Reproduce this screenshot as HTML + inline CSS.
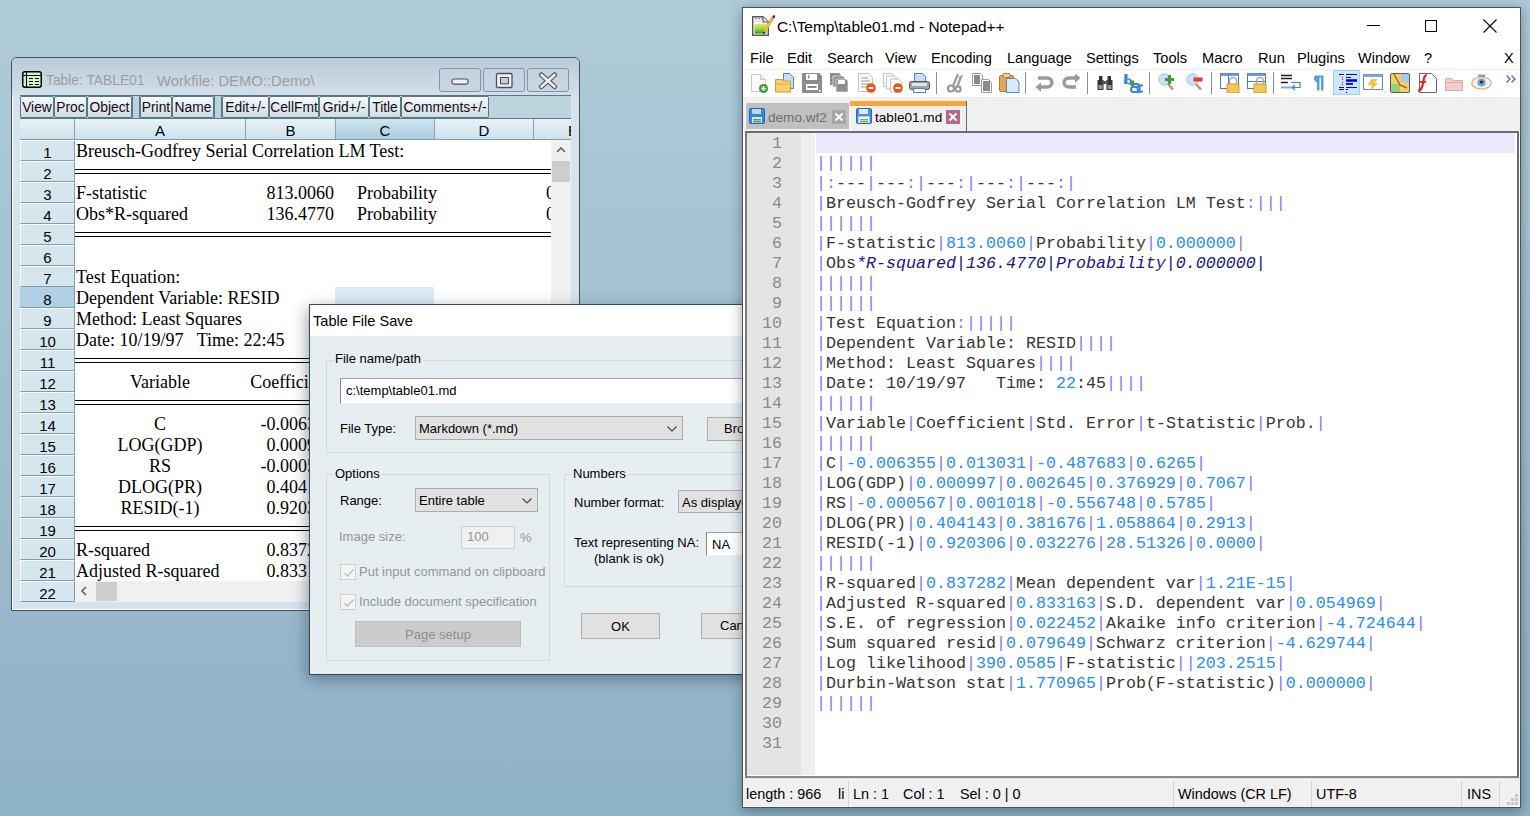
<!DOCTYPE html>
<html><head><meta charset="utf-8">
<style>
*{box-sizing:border-box;margin:0;padding:0}
html,body{width:1530px;height:816px;overflow:hidden}
body{position:relative;font-family:"Liberation Sans",sans-serif;background:linear-gradient(180deg,#afcbd8 0%,#a2c0cf 45%,#8eb2c6 100%)}
.a{position:absolute}

#ev{left:11px;top:57px;width:569px;height:554px;border:1px solid #4a4d52;border-radius:6px 6px 0 0;background:#d6e3ef;overflow:hidden;box-shadow:inset 1px 0 0 #fff,inset 0 -1px 0 #fff}
#evt{left:0;top:0;width:567px;height:37px;background:linear-gradient(180deg,#bccad8,#d2deea)}
#evtitle{left:34px;top:15px;font-size:13.8px;color:#9e9e9e;white-space:pre}
#evtitle2{left:145px;top:15px;font-size:14.8px;color:#9e9e9e;white-space:pre}
.wb{height:24px;width:42px;border:1px solid #8591ad;border-radius:3px;background:linear-gradient(180deg,#c4d1de,#c9d6e3)}
#evtb{left:8px;top:37px;width:551px;height:24px;background:#bdd3dd;border-top:1px solid #587683;border-bottom:1px solid #587683}
.tb{top:0;height:22px;border:1px solid #5a7785;border-radius:2px;background:linear-gradient(180deg,#f6f9fb 0%,#e3ebef 50%,#cfdde4 100%);font-size:13.8px;color:#140a14;text-align:center;line-height:22px;white-space:nowrap;overflow:hidden}
.tsep{top:0;height:22px;width:8px;background:#bcd2dc;border-left:1px solid #5a7785;border-right:1px solid #5a7785}
#colh{left:8px;top:61px;width:551px;height:21px;overflow:hidden;background:linear-gradient(180deg,#e9f2f6,#cde2ec);border-bottom:1px solid #7e9cab}
.ch{top:0;height:20px;border-left:1px solid #84a2b1;text-align:center;font-size:15px;line-height:24px;color:#000}
#grid{left:63px;top:82px;width:476px;height:441px;background:#fff;overflow:hidden}
.gc{position:absolute;margin-top:1px;font-family:"Liberation Serif",serif;font-size:18px;line-height:21px;height:21px;white-space:pre;color:#000}
.dl{position:absolute;left:0;width:476px;height:5px;border-top:1.5px solid #000;border-bottom:1.5px solid #000}
.rh{position:absolute;left:8px;width:55px;height:21px;background:#d5e6ef;border-top:1px solid #fff;border-left:1px solid #fff;border-bottom:1px solid #7e9cab;border-right:1px solid #7e9cab;text-align:center;font-size:15px;line-height:23px;color:#000}
.rh.sel{background:#b0d0e3;border-top-color:#b0d0e3;border-left-color:#b0d0e3}
#vsb{left:539px;top:82px;width:20px;height:441px;background:#f0f0f0}
#hsb{left:63px;top:523px;width:476px;height:21px;background:#f0f0f0}

#dlg{left:309px;top:304px;width:460px;height:371px;border:1px solid #3b4750;background:#e7eef1;box-shadow:-2px 4px 14px rgba(30,50,70,.45)}
#dlgt{left:0;top:0;width:460px;height:31px;background:#fff}
.dt{font-size:13px;color:#000;white-space:pre;line-height:16px}
.grp{border:1px solid #d8d8d6;border-radius:0}
.glbl{background:#e7eef1;padding:0 2px}
.btn{background:#e1e1e1;border:1px solid #adadad;text-align:center;font-size:13px;line-height:26px;color:#000}
.dd{background:#e1e1e1;border:1px solid #adadad}
.tbx{background:#fff;border-top:1px solid #a0a0a0;border-left:1px solid #8a8a8a;border-bottom:1px solid #f0f0f0;border-right:1px solid #f0f0f0}
.dis{color:#959595}

#npp{left:742px;top:7px;width:779px;height:801px;border:1px solid #4c5258;background:#fff;overflow:hidden;box-shadow:0 3px 12px rgba(20,40,60,.45)}
.nt{font-size:14px;color:#000;white-space:pre;line-height:17px}
#menub{left:0;top:38px;width:777px;height:24px;background:#fff}
#tbar{left:0;top:61px;width:776px;height:29px;background:#fff;border-top:1px solid #f0f0f0;border-bottom:1px solid #f0f0f0}
#tabs{left:0;top:90px;width:777px;height:33px;background:#f0f0f0}
#ed{left:2px;top:123px;width:774px;height:647px;background:#fff;border-top:2px solid #6d6d6d;border-left:2px solid #7a7a7a;border-right:2px solid #6d6d6d;border-bottom:2px solid #8a8a8a}
#lnm{left:0;top:0;width:54px;height:642px;background:#e4e4e4}
#fold{left:54px;top:0;width:14px;height:642px;background-color:#f4f4f4;background-image:linear-gradient(45deg,#e8e8e8 25%,transparent 25%,transparent 75%,#e8e8e8 75%),linear-gradient(45deg,#e8e8e8 25%,transparent 25%,transparent 75%,#e8e8e8 75%);background-size:2px 2px;background-position:0 0,1px 1px}
#curl{left:69px;top:0;width:699px;height:20px;background:#e8e8ff}
.ln{position:absolute;left:0;margin-top:1px;width:35px;text-align:right;font-family:"Liberation Mono",monospace;font-size:16.67px;line-height:20px;height:20px;color:#8a8a8a}
.tl{position:absolute;left:69px;margin-top:1px;font-family:"Liberation Mono",monospace;font-size:16.67px;line-height:20px;height:20px;white-space:pre;color:#303030}
.p{color:#7b7bf7}.n{color:#2b8cf0}.i{color:#15158a;font-style:italic}.d{color:#363636}
#stat{left:0;top:770px;width:777px;height:29px;background:#f0f0f0;border-top:1px solid #e4e4e4;border-bottom:1px solid #fff}
.sep{position:absolute;top:2px;width:1px;height:27px;background:#d4d4d4}

</style></head><body>
<div id="ev" class="a">
  <div id="evt" class="a"></div>
  <svg class="a" style="left:10px;top:13px" width="20" height="17" viewBox="0 0 20 17">
    <rect x="0.75" y="0.75" width="18.5" height="15.5" rx="2.2" fill="#d2f5c9" stroke="#000" stroke-width="1.5"/>
    <line x1="4.5" y1="0" x2="4.5" y2="17" stroke="#000" stroke-width="1.1"/>
    <line x1="0" y1="4.5" x2="20" y2="4.5" stroke="#000" stroke-width="1.1"/>
    <path d="M7 7.5h4M13 7.5h4M7 10.5h4M13 10.5h4M7 13.5h4M13 13.5h4" stroke="#000" stroke-width="1.1"/>
  </svg>
  <div id="evtitle" class="a">Table: TABLE01</div><div id="evtitle2" class="a">Workfile: DEMO::Demo\</div>
  <div class="a wb" style="left:427px;top:10px"><svg class="a" style="left:11px;top:9px" width="19" height="8" viewBox="0 0 19 8"><rect x="1" y="1" width="16" height="5.2" rx="2" fill="#f2f2f2" stroke="#4a4f60" stroke-width="1.2"/></svg></div>
  <div class="a wb" style="left:471px;top:10px"><svg class="a" style="left:11px;top:3px" width="19" height="18" viewBox="0 0 19 18"><rect x="1.5" y="1.5" width="15.5" height="14" rx="1.2" fill="#f2f2f2" stroke="#4a4f60" stroke-width="1.3"/><rect x="5.5" y="5.5" width="8" height="6.3" fill="#c4d1de" stroke="#4a4f60" stroke-width="1.1"/></svg></div>
  <div class="a wb" style="left:515px;top:10px"><svg class="a" style="left:10px;top:3px" width="20" height="18" viewBox="0 0 20 18"><path d="M3.5 3 L16.5 14.5 M16.5 3 L3.5 14.5" stroke="#4a4f60" stroke-width="5" stroke-linecap="round"/><path d="M3.5 3 L16.5 14.5 M16.5 3 L3.5 14.5" stroke="#eeeeee" stroke-width="2.8" stroke-linecap="round"/></svg></div>
  <div id="evtb" class="a">
    <div class="a tb" style="left:0;width:34px">View</div>
    <div class="a tb" style="left:34px;width:33px">Proc</div>
    <div class="a tb" style="left:67px;width:45px">Object</div>
    <div class="a tsep" style="left:112px"></div>
    <div class="a tb" style="left:120px;width:32px">Print</div>
    <div class="a tb" style="left:152px;width:42px">Name</div>
    <div class="a tsep" style="left:194px"></div>
    <div class="a tb" style="left:202px;width:47px">Edit+/-</div>
    <div class="a tb" style="left:249px;width:50px">CellFmt</div>
    <div class="a tb" style="left:299px;width:50px">Grid+/-</div>
    <div class="a tb" style="left:349px;width:32px">Title</div>
    <div class="a tb" style="left:381px;width:88px">Comments+/-</div>
  </div>
  <div id="colh" class="a">
    <div class="a ch" style="left:54px;width:171px">A</div>
    <div class="a ch" style="left:225px;width:90px">B</div>
    <div class="a ch" style="left:315px;width:99px;background:linear-gradient(180deg,#cfe4ef,#a9cde0)">C</div>
    <div class="a ch" style="left:414px;width:99px">D</div>
    <div class="a ch" style="left:513px;width:60px;text-align:left;padding-left:34px">E</div>
  </div>
  <div id="grid" class="a">
<div class="a" style="left:260px;top:147px;width:99px;height:21px;background:#dcecf6"></div>
<div class="gc" style="left:1px;top:0px">Breusch-Godfrey Serial Correlation LM Test:</div>
<div class="gc" style="left:1px;top:42px">F-statistic</div>
<div class="gc" style="left:171px;width:88px;top:42px;text-align:right">813.0060</div>
<div class="gc" style="left:282px;top:42px">Probability</div>
<div class="gc" style="left:471px;top:42px">0.000000</div>
<div class="gc" style="left:1px;top:63px">Obs*R-squared</div>
<div class="gc" style="left:171px;width:88px;top:63px;text-align:right">136.4770</div>
<div class="gc" style="left:282px;top:63px">Probability</div>
<div class="gc" style="left:471px;top:63px">0.000000</div>
<div class="gc" style="left:1px;top:126px">Test Equation:</div>
<div class="gc" style="left:1px;top:147px">Dependent Variable: RESID</div>
<div class="gc" style="left:1px;top:168px">Method: Least Squares</div>
<div class="gc" style="left:1px;top:189px">Date: 10/19/97   Time: 22:45</div>
<div class="gc" style="left:0px;width:170px;top:231px;text-align:center">Variable</div>
<div class="gc" style="left:171px;width:89px;top:231px;text-align:center">Coefficient</div>
<div class="gc" style="left:0px;width:170px;top:273px;text-align:center">C</div>
<div class="gc" style="left:171px;width:88px;top:273px;text-align:right">-0.006355</div>
<div class="gc" style="left:0px;width:170px;top:294px;text-align:center">LOG(GDP)</div>
<div class="gc" style="left:171px;width:88px;top:294px;text-align:right">0.000997</div>
<div class="gc" style="left:0px;width:170px;top:315px;text-align:center">RS</div>
<div class="gc" style="left:171px;width:88px;top:315px;text-align:right">-0.000567</div>
<div class="gc" style="left:0px;width:170px;top:336px;text-align:center">DLOG(PR)</div>
<div class="gc" style="left:171px;width:88px;top:336px;text-align:right">0.404143</div>
<div class="gc" style="left:0px;width:170px;top:357px;text-align:center">RESID(-1)</div>
<div class="gc" style="left:171px;width:88px;top:357px;text-align:right">0.920306</div>
<div class="gc" style="left:1px;top:399px">R-squared</div>
<div class="gc" style="left:171px;width:88px;top:399px;text-align:right">0.837282</div>
<div class="gc" style="left:1px;top:420px">Adjusted R-squared</div>
<div class="gc" style="left:171px;width:88px;top:420px;text-align:right">0.833163</div>
<div class="dl" style="top:29px"></div>
<div class="dl" style="top:92px"></div>
<div class="dl" style="top:218px"></div>
<div class="dl" style="top:260px"></div>
<div class="dl" style="top:386px"></div>
  </div>
<div class="rh" style="top:82px">1</div>
<div class="rh" style="top:103px">2</div>
<div class="rh" style="top:124px">3</div>
<div class="rh" style="top:145px">4</div>
<div class="rh" style="top:166px">5</div>
<div class="rh" style="top:187px">6</div>
<div class="rh" style="top:208px">7</div>
<div class="rh sel" style="top:229px">8</div>
<div class="rh" style="top:250px">9</div>
<div class="rh" style="top:271px">10</div>
<div class="rh" style="top:292px">11</div>
<div class="rh" style="top:313px">12</div>
<div class="rh" style="top:334px">13</div>
<div class="rh" style="top:355px">14</div>
<div class="rh" style="top:376px">15</div>
<div class="rh" style="top:397px">16</div>
<div class="rh" style="top:418px">17</div>
<div class="rh" style="top:439px">18</div>
<div class="rh" style="top:460px">19</div>
<div class="rh" style="top:481px">20</div>
<div class="rh" style="top:502px">21</div>
<div class="rh" style="top:523px">22</div>
  <div id="vsb" class="a">
    <svg class="a" style="left:5px;top:6px" width="10" height="8" viewBox="0 0 10 8"><path d="M1 6 L5 2 L9 6" fill="none" stroke="#606060" stroke-width="1.6"/></svg>
    <div class="a" style="left:1px;top:21px;width:18px;height:21px;background:#cdcdcd"></div>
  </div>
  <div id="hsb" class="a">
    <svg class="a" style="left:5px;top:5px" width="8" height="10" viewBox="0 0 8 10"><path d="M6 1 L2 5 L6 9" fill="none" stroke="#606060" stroke-width="1.6"/></svg>
    <div class="a" style="left:21px;top:1px;width:21px;height:19px;background:#cdcdcd"></div>
  </div>
</div>
<div id="dlg" class="a">
<div id="dlgt" class="a"></div>
<div class="a dt" style="left:3px;top:7px;font-size:14.6px;line-height:18px">Table File Save</div>
<div class="a grp" style="left:16px;top:55px;width:474px;height:93px;"></div>
<div class="a dt glbl" style="left:23px;top:46px;">File name/path</div>
<div class="a tbx" style="left:30px;top:73px;width:460px;height:26px;"></div>
<div class="a dt" style="left:36px;top:78px;">c:\temp\table01.md</div>
<div class="a dt" style="left:30px;top:116px;">File Type:</div>
<div class="a dd" style="left:105px;top:111px;width:268px;height:24px;"><svg class="a" style="right:5px;top:9px" width="10" height="6" viewBox="0 0 10 6"><path d="M0.5 0.5 L5 5 L9.5 0.5" fill="none" stroke="#404040" stroke-width="1.1"/></svg></div>
<div class="a dt" style="left:109px;top:116px;">Markdown (*.md)</div>
<div class="a btn" style="left:397px;top:112px;width:93px;height:24px;"></div>
<div class="a dt" style="left:414px;top:116px;">Browse...</div>
<div class="a grp" style="left:16px;top:169px;width:224px;height:187px;"></div>
<div class="a dt glbl" style="left:23px;top:161px;">Options</div>
<div class="a dt" style="left:30px;top:188px;">Range:</div>
<div class="a dd" style="left:105px;top:183px;width:123px;height:24px;"><svg class="a" style="right:5px;top:9px" width="10" height="6" viewBox="0 0 10 6"><path d="M0.5 0.5 L5 5 L9.5 0.5" fill="none" stroke="#404040" stroke-width="1.1"/></svg></div>
<div class="a dt" style="left:109px;top:188px;">Entire table</div>
<div class="a dt dis" style="left:29px;top:224px;">Image size:</div>
<div class="a" style="left:151px;top:221px;width:54px;height:23px;background:#f0f0f0;border:1px solid #cfcfcf"></div>
<div class="a dt dis" style="left:157px;top:224px;">100</div>
<div class="a dt dis" style="left:210px;top:225px;">%</div>
<div class="a" style="left:30px;top:259px;width:16px;height:16px;background:#f4f4f4;border:1px solid #cfcfcf"><svg class="a" style="left:2px;top:2px" width="12" height="12" viewBox="0 0 12 12"><path d="M1.5 6 L4.5 9 L10.5 2.5" fill="none" stroke="#bcbcbc" stroke-width="1.3"/></svg></div>
<div class="a dt dis" style="left:49px;top:259px;">Put input command on clipboard</div>
<div class="a" style="left:30px;top:289px;width:16px;height:16px;background:#f4f4f4;border:1px solid #cfcfcf"><svg class="a" style="left:2px;top:2px" width="12" height="12" viewBox="0 0 12 12"><path d="M1.5 6 L4.5 9 L10.5 2.5" fill="none" stroke="#bcbcbc" stroke-width="1.3"/></svg></div>
<div class="a dt dis" style="left:49px;top:289px;">Include document specification</div>
<div class="a" style="left:45px;top:316px;width:166px;height:26px;background:#cccccc;border:1px solid #bfbfbf;color:#8c8c8c;font-size:13px;line-height:26px;text-align:center">Page setup</div>
<div class="a grp" style="left:254px;top:169px;width:236px;height:113px;"></div>
<div class="a dt glbl" style="left:261px;top:161px;">Numbers</div>
<div class="a dt" style="left:264px;top:190px;">Number format:</div>
<div class="a dd" style="left:368px;top:185px;width:122px;height:23px;"></div>
<div class="a dt" style="left:372px;top:190px;">As displayed</div>
<div class="a dt" style="left:264px;top:230px;">Text representing NA:</div>
<div class="a dt" style="left:284px;top:246px;">(blank is ok)</div>
<div class="a tbx" style="left:396px;top:227px;width:94px;height:24px;"></div>
<div class="a dt" style="left:402px;top:232px;">NA</div>
<div class="a btn" style="left:271px;top:308px;width:79px;height:26px;">OK</div>
<div class="a btn" style="left:391px;top:308px;width:99px;height:26px;"></div>
<div class="a dt" style="left:410px;top:313px;">Cancel</div>
</div>
<div id="npp" class="a">
<svg class="a" style="left:9px;top:7px;" width="23" height="22" viewBox="0 0 23 22"><defs><linearGradient id="ng" x1="0" y1="0" x2="0" y2="1"><stop offset="0" stop-color="#e2e46a"/><stop offset="0.35" stop-color="#b6e040"/><stop offset="0.75" stop-color="#5cc82a"/><stop offset="1" stop-color="#208a18"/></linearGradient></defs><path d="M0.7 1.7 H11 L16.3 7 V20.3 H0.7 Z" fill="#f6f6f6" stroke="#585858" stroke-width="1.4"/><path d="M11 1.7 V7 H16.3" fill="#eaeaea" stroke="#585858" stroke-width="1.2"/><path d="M3 3.6h2M6 3.6h2M9 3.6h1.5" stroke="#9a9a9a" stroke-width="1.2"/><path d="M3 6.3h8" stroke="#b8cfe0" stroke-width="0.8"/><rect x="2.6" y="9" width="11.8" height="9.6" rx="0.8" fill="url(#ng)"/><path d="M20.3 3.5 L12.2 17.3" stroke="#f0aa18" stroke-width="3"/><path d="M20.3 3.5 L13 16" stroke="#f8cc50" stroke-width="1"/><path d="M12.5 16.8 L11.4 19" stroke="#333" stroke-width="1.6"/><path d="M21.3 1.8 L19.6 4.6" stroke="#9aa3b0" stroke-width="2.6"/><circle cx="22" cy="1.6" r="1.4" fill="#a00010"/></svg>
<div class="a nt" style="left:34px;top:10px;font-size:15.4px;line-height:18px;color:#000">C:\Temp\table01.md - Notepad++</div>
<svg class="a" style="left:624px;top:17px;" width="13" height="1" viewBox="0 0 13 1"><rect width="13" height="1" fill="#000"/></svg>
<svg class="a" style="left:682px;top:12px;" width="12" height="12" viewBox="0 0 12 12"><rect x="0.5" y="0.5" width="11" height="11" fill="none" stroke="#000"/></svg>
<svg class="a" style="left:740px;top:11px;" width="14" height="14" viewBox="0 0 14 14"><path d="M0.5 0.5 L13.5 13.5 M13.5 0.5 L0.5 13.5" stroke="#000" stroke-width="1.1"/></svg>
<div class="a nt" style="left:7px;top:42px;font-size:14.6px">File</div>
<div class="a nt" style="left:44px;top:42px;font-size:14.6px">Edit</div>
<div class="a nt" style="left:84px;top:42px;font-size:14.6px">Search</div>
<div class="a nt" style="left:142px;top:42px;font-size:14.6px">View</div>
<div class="a nt" style="left:188px;top:42px;font-size:14.6px">Encoding</div>
<div class="a nt" style="left:264px;top:42px;font-size:14.6px">Language</div>
<div class="a nt" style="left:343px;top:42px;font-size:14.6px">Settings</div>
<div class="a nt" style="left:410px;top:42px;font-size:14.6px">Tools</div>
<div class="a nt" style="left:459px;top:42px;font-size:14.6px">Macro</div>
<div class="a nt" style="left:515px;top:42px;font-size:14.6px">Run</div>
<div class="a nt" style="left:554px;top:42px;font-size:14.6px">Plugins</div>
<div class="a nt" style="left:615px;top:42px;font-size:14.6px">Window</div>
<div class="a nt" style="left:681px;top:42px;font-size:14.6px">?</div>
<div class="a nt" style="left:761px;top:42px;font-size:14.6px">X</div>
<div class="a" style="left:0;top:61px;width:776px;height:1px;background:#f0f0f0"></div>
<div class="a" style="left:0;top:89px;width:776px;height:1px;background:#ececec"></div>
<svg class="a" style="left:6px;top:65px;" width="20" height="20" viewBox="0 0 20 20"><path d="M2.5 1.5h9l5 5v12h-14z" fill="#fbfbfb" stroke="#c8c8c8"/><path d="M11.5 1.5v5h5" fill="#eee" stroke="#c8c8c8"/><circle cx="14.5" cy="15.5" r="4.5" fill="#3c9a3c"/><path d="M14.5 13v5M12 15.5h5" stroke="#fff" stroke-width="1.6"/></svg>
<svg class="a" style="left:32px;top:65px;" width="20" height="20" viewBox="0 0 20 20"><path d="M8.5 0.5h6l4 4v11h-10z" fill="#c9dcf7" stroke="#4a86d8"/><path d="M0.5 6.5h7l1 1.5h7v11h-15z" fill="#f6cf6e" stroke="#d99a2a"/><path d="M1 11h14" stroke="#e0b04a"/></svg>
<svg class="a" style="left:59px;top:65px;" width="20" height="20" viewBox="0 0 20 20"><path d="M0 0h17l3 3v17h-20z" fill="#8d8d8d"/><rect x="4" y="1" width="11" height="6" fill="#fff"/><rect x="6" y="2" width="1.4" height="3.5" fill="#8d8d8d"/><rect x="4" y="11" width="12" height="6" fill="#fff"/><rect x="5.5" y="13" width="9" height="2" fill="#8d8d8d"/><rect x="17" y="17" width="1.6" height="1.6" fill="#fff"/></svg>
<svg class="a" style="left:87px;top:65px;" width="19" height="20" viewBox="0 0 19 20"><path d="M0 0h9l2 2v10h-11z" fill="#8d8d8d"/><path d="M3 3h10l2 2v9h-12z" fill="#8d8d8d" stroke="#fff" stroke-width="0.6"/><path d="M6 6h10l2 2v11h-12z" fill="#8d8d8d" stroke="#fff" stroke-width="0.6"/><rect x="8" y="7" width="7" height="4" fill="#fff"/></svg>
<svg class="a" style="left:114px;top:65px;" width="20" height="20" viewBox="0 0 20 20"><path d="M1.5 0.5h10l4 4v14h-14z" fill="#fafafa" stroke="#c4c4c4"/><path d="M4 5h7M4 8h9M4 11h8M4 14h6" stroke="#9a9a9a" stroke-width="1"/><circle cx="14" cy="15" r="4.8" fill="#e2571d"/><path d="M11.5 15h5" stroke="#fff" stroke-width="1.8"/></svg>
<svg class="a" style="left:140px;top:65px;" width="21" height="20" viewBox="0 0 21 20"><path d="M0.5 0.5h8l3 3v10h-11z" fill="#fafafa" stroke="#c4c4c4"/><path d="M3.5 3h8l3 3v10h-11z" fill="#fafafa" stroke="#c4c4c4"/><path d="M7.5 6h8l3 3v10h-11z" fill="#fafafa" stroke="#c4c4c4"/><circle cx="15" cy="15" r="4.8" fill="#e2571d"/><path d="M12.5 15h5" stroke="#fff" stroke-width="1.8"/></svg>
<svg class="a" style="left:166px;top:65px;" width="21" height="20" viewBox="0 0 21 20"><path d="M5.5 0.5h8l3 3v6h-11z" fill="#c9dcf7" stroke="#4a86d8"/><rect x="0.5" y="8.5" width="20" height="8" rx="2" fill="#9ea3a8" stroke="#4d5257"/><rect x="3" y="10" width="15" height="3" fill="#e0e3e6"/><rect x="4.5" y="15.5" width="12" height="4" fill="#fff" stroke="#4a86d8"/></svg>
<svg class="a" style="left:193px;top:64px;" width="1" height="22" viewBox="0 0 1 22"><rect width="1" height="22" fill="#8e8e8e"/></svg>
<svg class="a" style="left:204px;top:65px;" width="16" height="20" viewBox="0 0 16 20"><path d="M11 1 L6 13 M12 5 L14 4 L10 14" stroke="#999" stroke-width="2.2" fill="none"/><circle cx="4" cy="15.5" r="3" fill="none" stroke="#999" stroke-width="2.2"/><circle cx="11" cy="16" r="2.6" fill="none" stroke="#999" stroke-width="2.2"/></svg>
<svg class="a" style="left:229px;top:65px;" width="20" height="20" viewBox="0 0 20 20"><path d="M0.5 0.5h8l2 2v10h-10z" fill="#fff" stroke="#9a9a9a"/><rect x="2" y="2" width="6" height="9" fill="#8a8a8a"/><path d="M9.5 6.5h7l3 3v10h-10z" fill="#fff" stroke="#9a9a9a"/><rect x="11" y="8" width="7" height="10" fill="#8a8a8a"/></svg>
<svg class="a" style="left:256px;top:65px;" width="21" height="20" viewBox="0 0 21 20"><rect x="0.5" y="2.5" width="14" height="16" rx="1.5" fill="#e5a655" stroke="#b87a30"/><rect x="4" y="0.5" width="7" height="4" rx="1" fill="#f3d28c" stroke="#b87a30"/><path d="M7.5 5.5h9l3.5 3.5v10.5h-12.5z" fill="#dce8fb" stroke="#4a86d8"/></svg>
<svg class="a" style="left:282px;top:64px;" width="1" height="22" viewBox="0 0 1 22"><rect width="1" height="22" fill="#8e8e8e"/></svg>
<svg class="a" style="left:292px;top:66px;" width="19" height="19" viewBox="0 0 19 19"><path d="M3 4 H12 A5 4.5 0 0 1 12 13 H5" fill="none" stroke="#9a9a9a" stroke-width="3.4"/><path d="M0.5 13 L6 8.5 L6 18 Z" fill="#9a9a9a"/></svg>
<svg class="a" style="left:319px;top:66px;" width="19" height="19" viewBox="0 0 19 19"><path d="M16 4 H7 A5 4.5 0 0 0 7 13 H14" fill="none" stroke="#9a9a9a" stroke-width="3.4"/><path d="M18.5 4 L13 -0.5 L13 9 Z" fill="#9a9a9a"/></svg>
<svg class="a" style="left:344px;top:64px;" width="1" height="22" viewBox="0 0 1 22"><rect width="1" height="22" fill="#8e8e8e"/></svg>
<svg class="a" style="left:354px;top:67px;" width="16" height="16" viewBox="0 0 16 16"><rect x="0.5" y="5" width="6" height="10" fill="#333"/><rect x="9.5" y="5" width="6" height="10" fill="#333"/><rect x="2" y="1" width="3.5" height="5" fill="#333"/><rect x="10.5" y="1" width="3.5" height="5" fill="#333"/><rect x="5" y="6" width="6" height="3" fill="#556"/><rect x="1.5" y="10" width="4" height="4" fill="#8b99a8"/><rect x="10.5" y="10" width="4" height="4" fill="#8b99a8"/></svg>
<svg class="a" style="left:380px;top:65px;" width="20" height="20" viewBox="0 0 20 20"><path d="M1.5 1 h3 v4.5 a3 3 0 1 1 0 5.5 h-3.5 z M4.5 6.5 v3.5 a1.8 1.8 0 1 0 0 -3.5z" fill="#3a82e0" fill-rule="evenodd"/><path d="M8 7.5 h3 v3 h2 l-3.5 4 l-3.5 -4 h2z" fill="#3c9a3c"/><path d="M10.5 11 h3.5 a2.5 2.5 0 0 1 2.5 2.5 v5.5 h-6 a2.5 2.5 0 0 1 0 -5 h3.5" fill="none" stroke="#3a82e0" stroke-width="2"/><path d="M20 12.5 h-2.5 a3 3 0 0 0 0 6 h2.5" fill="none" stroke="#3a82e0" stroke-width="2"/></svg>
<svg class="a" style="left:406px;top:64px;" width="1" height="22" viewBox="0 0 1 22"><rect width="1" height="22" fill="#8e8e8e"/></svg>
<svg class="a" style="left:415px;top:65px;" width="18" height="18" viewBox="0 0 18 18"><circle cx="6.5" cy="6.5" r="5.8" fill="#cfe0f6" stroke="#a7c2e8"/><path d="M10 11 L15 16.5" stroke="#c7925a" stroke-width="2.6"/><path d="M11.5 2 v9 M7 6.5 h9" stroke="#3d9a3d" stroke-width="3.2"/></svg>
<svg class="a" style="left:443px;top:65px;" width="18" height="18" viewBox="0 0 18 18"><circle cx="6.5" cy="6.5" r="5.8" fill="#cfe0f6" stroke="#a7c2e8"/><path d="M10 11 L15 16.5" stroke="#c7925a" stroke-width="2.6"/><rect x="7.5" y="4.5" width="9" height="4" fill="#e63535"/></svg>
<svg class="a" style="left:468px;top:64px;" width="1" height="22" viewBox="0 0 1 22"><rect width="1" height="22" fill="#8e8e8e"/></svg>
<svg class="a" style="left:477px;top:65px;" width="21" height="20" viewBox="0 0 21 20"><rect x="0.5" y="0.5" width="18" height="15" fill="#fff" stroke="#4a78c8"/><rect x="0.5" y="0.5" width="18" height="2.5" fill="#6a9ae0"/><path d="M8.5 1v14" stroke="#4a78c8"/><rect x="7" y="11" width="12" height="9" fill="#f2c85a" stroke="#d09a30"/><path d="M9.5 11 v-3 a3 3 0 0 1 7 0 v3" fill="none" stroke="#aaa" stroke-width="1.6"/></svg>
<svg class="a" style="left:504px;top:65px;" width="21" height="20" viewBox="0 0 21 20"><rect x="0.5" y="0.5" width="18" height="15" fill="#fff" stroke="#4a78c8"/><rect x="0.5" y="0.5" width="18" height="2.5" fill="#6a9ae0"/><path d="M1 8.5h17" stroke="#4a78c8"/><rect x="7" y="11" width="12" height="9" fill="#f2c85a" stroke="#d09a30"/><path d="M9.5 11 v-3 a3 3 0 0 1 7 0 v3" fill="none" stroke="#aaa" stroke-width="1.6"/></svg>
<svg class="a" style="left:530px;top:64px;" width="1" height="22" viewBox="0 0 1 22"><rect width="1" height="22" fill="#8e8e8e"/></svg>
<svg class="a" style="left:538px;top:66px;" width="21" height="18" viewBox="0 0 21 18"><path d="M0 1.5h11M0 4.5h11M0 8.5h7" stroke="#222" stroke-width="1.3"/><path d="M10 8.5h9v5h-7" fill="none" stroke="#4a7bd0" stroke-width="1.2"/><path d="M0 13.5h12" stroke="#88a8e0" stroke-width="2"/><path d="M14 11 L11.5 13.5 L14 16" fill="none" stroke="#4a7bd0" stroke-width="1.2"/></svg>
<svg class="a" style="left:569px;top:67px;" width="12" height="16" viewBox="0 0 12 16"><path d="M4 0.5h7.5v15h-2.5v-13h-1.5v13h-2.5v-8a4 4 0 0 1 -1 -7.5z" fill="#5b9ae6"/></svg>
<svg class="a" style="left:590px;top:62px;" width="27" height="25" viewBox="0 0 27 25"><rect x="0.5" y="0.5" width="26" height="24" fill="#cce8ff" stroke="#99d1ff"/><path d="M6 4.5h5M13 4.5h11M13 7.5h5M13 17.5h11M6 17.5h5M6 19.5h5M13 19.5h2" stroke="#0000f0" stroke-width="1.2"/><rect x="13" y="9.2" width="11" height="2.6" fill="#0000f0"/><rect x="13" y="13" width="7" height="1.8" fill="#0000f0"/><circle cx="13.5" cy="22.5" r="0.7" fill="#0000f0"/><path d="M9.5 7v1M9.5 9v1M9.5 12v1M9.5 14v1" stroke="#f00010" stroke-width="1.1"/></svg>
<svg class="a" style="left:620px;top:66px;" width="20" height="18" viewBox="0 0 20 18"><rect x="0.5" y="0.5" width="19" height="15" fill="#fff" stroke="#5a8ad8"/><rect x="0.5" y="0.5" width="19" height="2.5" fill="#7aa6e6"/><path d="M8 5h7l-4 4h4l-8 8 2-6h-4z" fill="#f0c040"/></svg>
<svg class="a" style="left:647px;top:65px;" width="20" height="20" viewBox="0 0 20 20"><rect x="0.5" y="0.5" width="19" height="19" rx="1.5" fill="#e6d860" stroke="#555a6a"/><rect x="11" y="1" width="8" height="8" fill="#a7c8ef"/><rect x="1" y="11" width="9" height="8" fill="#9ccf7a"/><path d="M4 1 L10 12 L17 15" stroke="#e34040" stroke-width="1.4" fill="none"/></svg>
<svg class="a" style="left:675px;top:65px;" width="20" height="20" viewBox="0 0 20 20"><path d="M1.5 0.5h12l5 5v14h-17z" fill="#fff" stroke="#666"/><path d="M9 2 C5 2 6 9 4 14 S1 18 0 17" stroke="#e02525" stroke-width="2.2" fill="none"/><path d="M2 9h6" stroke="#e02525" stroke-width="1.8"/></svg>
<svg class="a" style="left:702px;top:68px;" width="18" height="15" viewBox="0 0 18 15"><path d="M0.5 2.5h6l2 2h9v10h-17z" fill="#f3cccc" stroke="#e0a8a8"/><path d="M1 6.5h16" stroke="#e0a8a8"/></svg>
<svg class="a" style="left:728px;top:66px;" width="21" height="17" viewBox="0 0 21 17"><ellipse cx="10.5" cy="9" rx="9.8" ry="6" fill="#eef3f6" stroke="#e7a86a" stroke-width="1.2"/><circle cx="10.5" cy="8.5" r="4" fill="#7aa0d0"/><circle cx="10.5" cy="8" r="1.6" fill="#223"/><rect x="7" y="0.5" width="7" height="2.5" fill="#8ea0ae"/></svg>
<svg class="a" style="left:763px;top:67px;" width="11" height="8" viewBox="0 0 11 8"><path d="M0.5 0.5 L4 4 L0.5 7.5 M5.5 0.5 L9 4 L5.5 7.5" fill="none" stroke="#5a5aa0" stroke-width="1.2"/></svg>
<div id="tabs" class="a"></div>
<div class="a" style="left:2px;top:95px;width:104px;height:26px;background:#c0c0c0;border-left:1px solid #fff"></div>
<div class="a" style="left:107px;top:93px;width:117px;height:30px;background:#f0f0f0;border-right:1px solid #6e6e6e;border-left:1px solid #fff"></div>
<div class="a" style="left:107px;top:93px;width:116px;height:5px;background:#faa537"></div>
<svg class="a" style="left:6px;top:100px;" width="16" height="16" viewBox="0 0 16 16"><rect x="0.5" y="0.5" width="15" height="15" rx="1.5" fill="#3b82d8" stroke="#2266c0"/><rect x="3" y="1" width="9" height="5" fill="#b9d6f5"/><rect x="3" y="9" width="10" height="6" fill="#d8ecf8"/><rect x="4" y="11" width="8" height="1.5" fill="#4aa070"/><rect x="4" y="13" width="8" height="1.5" fill="#4aa070"/></svg>
<div class="a nt" style="left:25px;top:101px;font-size:13.6px;color:#6d6d6d">demo.wf2</div>
<svg class="a" style="left:89px;top:102px;" width="14" height="14" viewBox="0 0 14 14"><rect width="14" height="14" fill="#a6a6a6"/><path d="M3.5 3.5 L10.5 10.5 M10.5 3.5 L3.5 10.5" stroke="#fff" stroke-width="2"/></svg>
<svg class="a" style="left:113px;top:100px;" width="16" height="16" viewBox="0 0 16 16"><rect x="0.5" y="0.5" width="15" height="15" rx="1.5" fill="#4f8ee0" stroke="#2266c0"/><rect x="3" y="1" width="9" height="5" fill="#dbe9f8"/><rect x="2.5" y="8.5" width="11" height="6.5" fill="#fff"/><rect x="4" y="11" width="8" height="1.5" fill="#6cc04a"/><rect x="4" y="13" width="8" height="1.5" fill="#6cc04a"/></svg>
<div class="a nt" style="left:132px;top:101px;font-size:13.6px;color:#000">table01.md</div>
<svg class="a" style="left:203px;top:102px;" width="14" height="14" viewBox="0 0 14 14"><rect width="14" height="14" fill="#b46a86"/><path d="M3.5 3.5 L10.5 10.5 M10.5 3.5 L3.5 10.5" stroke="#fff" stroke-width="2"/></svg>
<div id="ed" class="a">
<div id="lnm" class="a"></div><div id="fold" class="a"></div><div id="curl" class="a"></div>
<div class="ln" style="top:0px">1</div>
<div class="ln" style="top:20px">2</div>
<div class="tl" style="top:20px"><span class="p">||||||</span></div>
<div class="ln" style="top:40px">3</div>
<div class="tl" style="top:40px"><span class="p">|:</span><span class="d">---</span><span class="p">|</span><span class="d">---</span><span class="p">:|</span><span class="d">---</span><span class="p">:|</span><span class="d">---</span><span class="p">:|</span><span class="d">---</span><span class="p">:|</span></div>
<div class="ln" style="top:60px">4</div>
<div class="tl" style="top:60px"><span class="p">|</span><span class="d">Breusch-Godfrey Serial Correlation LM Test</span><span class="p">:|||</span></div>
<div class="ln" style="top:80px">5</div>
<div class="tl" style="top:80px"><span class="p">||||||</span></div>
<div class="ln" style="top:100px">6</div>
<div class="tl" style="top:100px"><span class="p">|</span><span class="d">F-statistic</span><span class="p">|</span><span class="n">813.0060</span><span class="p">|</span><span class="d">Probability</span><span class="p">|</span><span class="n">0.000000</span><span class="p">|</span></div>
<div class="ln" style="top:120px">7</div>
<div class="tl" style="top:120px"><span class="p">|</span><span class="d">Obs</span><span class="i">*R-squared|136.4770|Probability|0.000000|</span></div>
<div class="ln" style="top:140px">8</div>
<div class="tl" style="top:140px"><span class="p">||||||</span></div>
<div class="ln" style="top:160px">9</div>
<div class="tl" style="top:160px"><span class="p">||||||</span></div>
<div class="ln" style="top:180px">10</div>
<div class="tl" style="top:180px"><span class="p">|</span><span class="d">Test Equation</span><span class="p">:|||||</span></div>
<div class="ln" style="top:200px">11</div>
<div class="tl" style="top:200px"><span class="p">|</span><span class="d">Dependent Variable: RESID</span><span class="p">||||</span></div>
<div class="ln" style="top:220px">12</div>
<div class="tl" style="top:220px"><span class="p">|</span><span class="d">Method: Least Squares</span><span class="p">||||</span></div>
<div class="ln" style="top:240px">13</div>
<div class="tl" style="top:240px"><span class="p">|</span><span class="d">Date: 10/19/97   Time: </span><span class="n">22</span><span class="d">:45</span><span class="p">||||</span></div>
<div class="ln" style="top:260px">14</div>
<div class="tl" style="top:260px"><span class="p">||||||</span></div>
<div class="ln" style="top:280px">15</div>
<div class="tl" style="top:280px"><span class="p">|</span><span class="d">Variable</span><span class="p">|</span><span class="d">Coefficient</span><span class="p">|</span><span class="d">Std. Error</span><span class="p">|</span><span class="d">t-Statistic</span><span class="p">|</span><span class="d">Prob.</span><span class="p">|</span></div>
<div class="ln" style="top:300px">16</div>
<div class="tl" style="top:300px"><span class="p">||||||</span></div>
<div class="ln" style="top:320px">17</div>
<div class="tl" style="top:320px"><span class="p">|</span><span class="d">C</span><span class="p">|</span><span class="n">-0.006355</span><span class="p">|</span><span class="n">0.013031</span><span class="p">|</span><span class="n">-0.487683</span><span class="p">|</span><span class="n">0.6265</span><span class="p">|</span></div>
<div class="ln" style="top:340px">18</div>
<div class="tl" style="top:340px"><span class="p">|</span><span class="d">LOG(GDP)</span><span class="p">|</span><span class="n">0.000997</span><span class="p">|</span><span class="n">0.002645</span><span class="p">|</span><span class="n">0.376929</span><span class="p">|</span><span class="n">0.7067</span><span class="p">|</span></div>
<div class="ln" style="top:360px">19</div>
<div class="tl" style="top:360px"><span class="p">|</span><span class="d">RS</span><span class="p">|</span><span class="n">-0.000567</span><span class="p">|</span><span class="n">0.001018</span><span class="p">|</span><span class="n">-0.556748</span><span class="p">|</span><span class="n">0.5785</span><span class="p">|</span></div>
<div class="ln" style="top:380px">20</div>
<div class="tl" style="top:380px"><span class="p">|</span><span class="d">DLOG(PR)</span><span class="p">|</span><span class="n">0.404143</span><span class="p">|</span><span class="n">0.381676</span><span class="p">|</span><span class="n">1.058864</span><span class="p">|</span><span class="n">0.2913</span><span class="p">|</span></div>
<div class="ln" style="top:400px">21</div>
<div class="tl" style="top:400px"><span class="p">|</span><span class="d">RESID(-1)</span><span class="p">|</span><span class="n">0.920306</span><span class="p">|</span><span class="n">0.032276</span><span class="p">|</span><span class="n">28.51326</span><span class="p">|</span><span class="n">0.0000</span><span class="p">|</span></div>
<div class="ln" style="top:420px">22</div>
<div class="tl" style="top:420px"><span class="p">||||||</span></div>
<div class="ln" style="top:440px">23</div>
<div class="tl" style="top:440px"><span class="p">|</span><span class="d">R-squared</span><span class="p">|</span><span class="n">0.837282</span><span class="p">|</span><span class="d">Mean dependent var</span><span class="p">|</span><span class="n">1.21E-15</span><span class="p">|</span></div>
<div class="ln" style="top:460px">24</div>
<div class="tl" style="top:460px"><span class="p">|</span><span class="d">Adjusted R-squared</span><span class="p">|</span><span class="n">0.833163</span><span class="p">|</span><span class="d">S.D. dependent var</span><span class="p">|</span><span class="n">0.054969</span><span class="p">|</span></div>
<div class="ln" style="top:480px">25</div>
<div class="tl" style="top:480px"><span class="p">|</span><span class="d">S.E. of regression</span><span class="p">|</span><span class="n">0.022452</span><span class="p">|</span><span class="d">Akaike info criterion</span><span class="p">|</span><span class="n">-4.724644</span><span class="p">|</span></div>
<div class="ln" style="top:500px">26</div>
<div class="tl" style="top:500px"><span class="p">|</span><span class="d">Sum squared resid</span><span class="p">|</span><span class="n">0.079649</span><span class="p">|</span><span class="d">Schwarz criterion</span><span class="p">|</span><span class="n">-4.629744</span><span class="p">|</span></div>
<div class="ln" style="top:520px">27</div>
<div class="tl" style="top:520px"><span class="p">|</span><span class="d">Log likelihood</span><span class="p">|</span><span class="n">390.0585</span><span class="p">|</span><span class="d">F-statistic</span><span class="p">||</span><span class="n">203.2515</span><span class="p">|</span></div>
<div class="ln" style="top:540px">28</div>
<div class="tl" style="top:540px"><span class="p">|</span><span class="d">Durbin-Watson stat</span><span class="p">|</span><span class="n">1.770965</span><span class="p">|</span><span class="d">Prob(F-statistic)</span><span class="p">|</span><span class="n">0.000000</span><span class="p">|</span></div>
<div class="ln" style="top:560px">29</div>
<div class="tl" style="top:560px"><span class="p">||||||</span></div>
<div class="ln" style="top:580px">30</div>
<div class="ln" style="top:600px">31</div>
</div>
<div id="stat" class="a">
<div class="a nt" style="left:3px;top:7px;font-size:14.4px">length : 966</div>
<div class="a nt" style="left:95px;top:7px;font-size:14.4px">li</div>
<div class="a" style="left:109px;top:0;width:660px;height:29px;background:#f0f0f0"></div>
<div class="a nt" style="left:110px;top:7px;font-size:14.4px">Ln : 1</div>
<div class="a nt" style="left:160px;top:7px;font-size:14.4px">Col : 1</div>
<div class="a nt" style="left:217px;top:7px;font-size:14.4px">Sel : 0 | 0</div>
<div class="a nt" style="left:435px;top:7px;font-size:14.4px">Windows (CR LF)</div>
<div class="a nt" style="left:573px;top:7px;font-size:14.4px">UTF-8</div>
<div class="a nt" style="left:724px;top:7px;font-size:14.4px">INS</div>
<div class="sep" style="left:105px"></div>
<div class="sep" style="left:430px"></div>
<div class="sep" style="left:568px"></div>
<div class="sep" style="left:718px"></div>
<div class="sep" style="left:756px"></div>
<svg class="a" style="left:764px;top:15px" width="12" height="12" viewBox="0 0 12 12"><path d="M8 0h3v3h-3zM4 4h3v3h-3zM8 4h3v3h-3zM0 8h3v3h-3zM4 8h3v3h-3zM8 8h3v3h-3z" fill="#c8c8c8"/></svg>
</div>
</div>
</body></html>
